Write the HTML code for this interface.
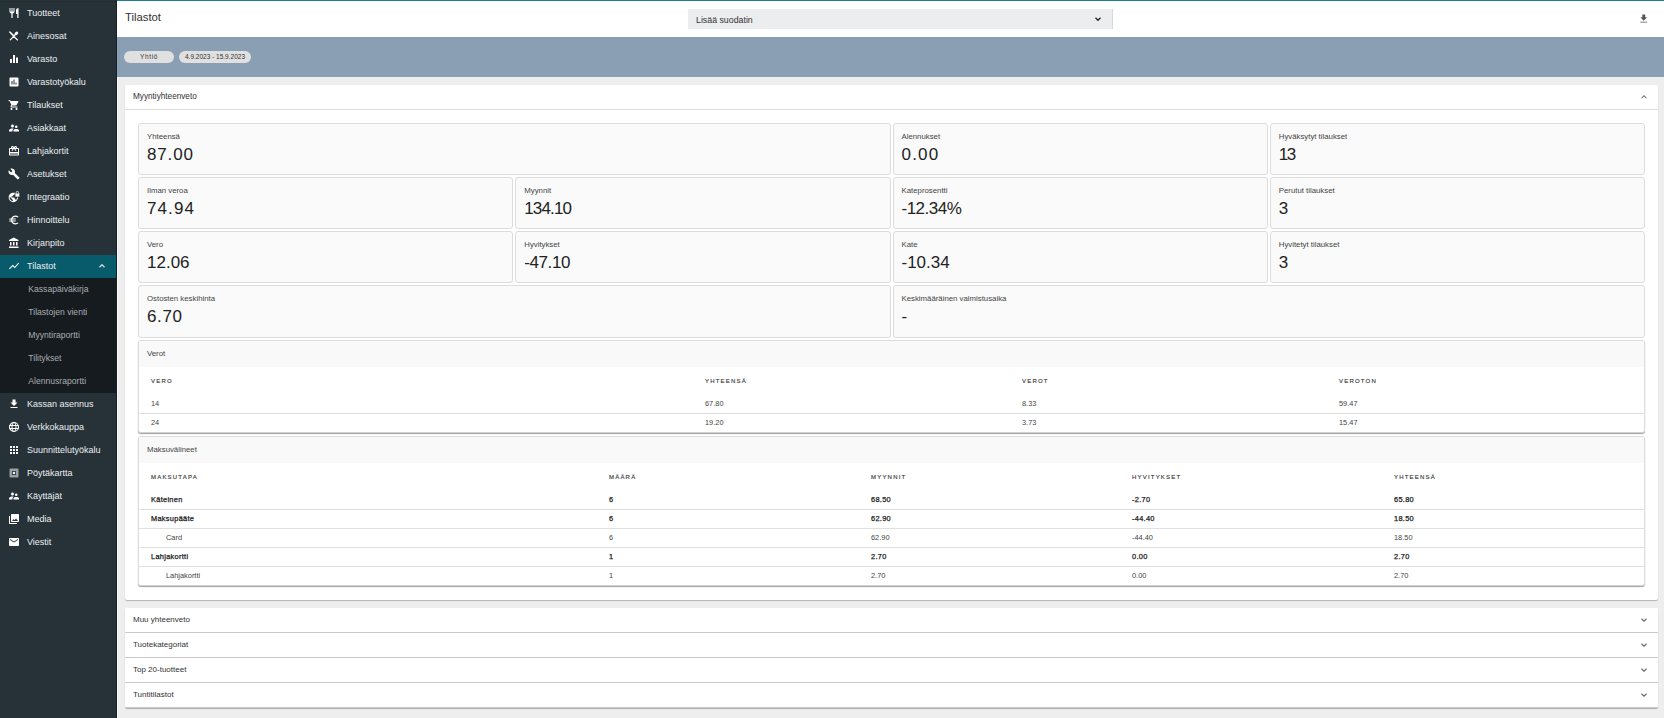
<!DOCTYPE html>
<html><head><meta charset="utf-8"><style>
*{box-sizing:border-box;margin:0;padding:0}
html,body{width:1664px;height:718px;overflow:hidden;background:#eeeeee;font-family:"Liberation Sans",sans-serif;position:relative}
#side{position:absolute;left:0;top:0;width:117px;height:718px;background:#263238;border-right:1px solid #182024}
#side:before{content:"";position:absolute;left:0;top:1px;width:116px;height:1px;background:#222b30}
#lite{position:absolute;left:117px;top:77px;width:1px;height:641px;background:#f7f7f7}
.si{position:absolute;left:0;width:116px;height:23px;color:#eceff1;font-size:9px}
.si span{position:absolute;left:27px;top:5px;line-height:12px;white-space:nowrap}
.si .ic{position:absolute;left:7.5px;top:5px;width:12px;height:12px}
.act{background:#085b6a}
.act .chev{position:absolute;left:97px;top:6px;width:10px;height:10px}
.subbg{position:absolute;left:0;width:116px;background:#161b1f}
.sub{color:#a9adb1;font-size:8.6px}
.sub span{left:28.3px}
#hdr{position:absolute;left:117px;top:0;width:1547px;height:37px;background:#fff;border-top:1px solid #1b7e92}
#hdr .title{position:absolute;left:8px;top:9px;font-size:11.3px;line-height:14px;color:#333}
#sel{position:absolute;left:571px;top:8px;width:425px;height:20px;background:#ecedef;border-right:1px solid #d8d9db}
#sel span{position:absolute;left:8px;top:6px;font-size:8.8px;line-height:10px;color:#333}
#sel svg{position:absolute;left:405px;top:5px;width:10px;height:10px}
#dl{position:absolute;left:1521px;top:11.8px;width:11.5px;height:11.5px}
#band{position:absolute;left:117px;top:37px;width:1547px;height:40px;background:#8a9fb4}
.chip{position:absolute;top:13.5px;height:12.5px;border-radius:7px;background:#e0e0e0;font-size:6.5px;line-height:12.5px;color:#333;text-align:center;white-space:nowrap}
#card{position:absolute;left:125px;top:85px;width:1533px;height:515px;background:#fff;border-radius:2px;box-shadow:0 1px 1px rgba(0,0,0,.25)}
#card .hd{position:absolute;left:0;top:0;width:100%;height:25px;border-bottom:1px solid #e0e0e0}
#card .hd span{position:absolute;left:8px;top:7px;font-size:8.2px;line-height:10px;color:#333}
.pchev{position:absolute;right:9px;top:7px;width:10px;height:10px}
.sc{position:absolute;background:#fafafa;border:1px solid #dcdcdc;border-radius:3px}
.sc .lb{position:absolute;left:8px;top:8px;font-size:7.8px;line-height:9px;color:#444;white-space:nowrap}
.sc .vl{position:absolute;left:8px;top:21px;font-size:17px;line-height:20px;letter-spacing:0.7px;color:#222;white-space:nowrap}
.tp{position:absolute;left:138px;width:1507px;background:#fff;border:1px solid #dcdcdc;border-bottom-color:#d2d2d2;border-radius:3px;box-shadow:0 1px 1px rgba(0,0,0,.38)}
.tp .th{position:absolute;left:0;top:0;width:100%;height:26px;background:#f9f9f9;font-size:7.8px;line-height:10px;padding:8px 0 0 8px;color:#444}
.hc{position:absolute;top:36px;font-size:6px;line-height:8px;font-weight:normal;-webkit-text-stroke:0.15px #3a3a3a;letter-spacing:1.2px;color:#3a3a3a}
.tr{position:absolute;left:0;width:100%;height:19px;border-bottom:1px solid #e0e0e0;font-size:7.4px;color:#444}
.tr:last-child{border-bottom:none}
.tr span{position:absolute;top:4px;line-height:9px;white-space:nowrap}
.tr.b{font-weight:normal;color:#1a1a1a;-webkit-text-stroke:0.25px #1a1a1a;letter-spacing:0.3px}
.cp{position:absolute;left:125px;width:1533px;height:25px;background:#fff;border-bottom:1px solid #c9c9c9}
.cp span{position:absolute;left:8px;top:7px;font-size:8px;line-height:10px;color:#333}
.cp .pchev{top:7px}
#cps{position:absolute;left:0;top:0}
</style></head><body>
<div id="side">
<div class="si" style="top:2px"><svg class="ic" viewBox="0 0 24 24"><path fill="#fff" d="M11 9H9V2H7v7H5V2H3v7c0 2.12 1.66 3.84 3.75 3.97V22h2.5v-9.03C11.34 12.84 13 11.12 13 9V2h-2v7zm5-3v8h2.5v8H21V2c-2.76 0-5 2.24-5 4z"/></svg><span>Tuotteet</span></div>
<div class="si" style="top:25px"><svg class="ic" viewBox="0 0 24 24"><path fill="#fff" d="M2.6 3.4c.5-.8 1.3-.9 2-.4l7.6 7.2-2.5 2.5L3 5.6c-.6-.6-.8-1.4-.4-2.2z"/><path d="M10.5 11.5L19 20M14 10L4.5 19.8" stroke="#fff" stroke-width="2.3" stroke-linecap="round"/><ellipse cx="16.8" cy="6.8" rx="4.3" ry="2.9" transform="rotate(-45 16.8 6.8)" fill="#fff"/></svg><span>Ainesosat</span></div>
<div class="si" style="top:48px"><svg class="ic" viewBox="0 0 24 24"><path fill="#fff" d="M10 20h4V4h-4v16zm-6 0h4v-8H4v8zM16 9v11h4V9h-4z"/></svg><span>Varasto</span></div>
<div class="si" style="top:71px"><svg class="ic" viewBox="0 0 24 24"><path fill="#fff" d="M19 3H5c-1.1 0-2 .9-2 2v14c0 1.1.9 2 2 2h14c1.1 0 2-.9 2-2V5c0-1.1-.9-2-2-2zM9 17H7v-7h2v7zm4 0h-2V7h2v10zm4 0h-2v-4h2v4z"/></svg><span>Varastotyökalu</span></div>
<div class="si" style="top:94px"><svg class="ic" viewBox="0 0 24 24"><path fill="#fff" d="M7 18c-1.1 0-1.99.9-1.99 2S5.9 22 7 22s2-.9 2-2-.9-2-2-2zM1 2v2h2l3.6 7.59-1.35 2.45c-.16.28-.25.61-.25.96 0 1.1.9 2 2 2h12v-2H7.42c-.14 0-.25-.11-.25-.25l.03-.12.9-1.630h7.45c.75 0 1.41-.41 1.75-1.03l3.58-6.49c.08-.14.12-.31.12-.48 0-.55-.45-1-1-1H5.21l-.94-2H1zm16 16c-1.1 0-1.99.9-1.99 2s.89 2 1.990 2 2-.9 2-2-.9-2-2-2z"/></svg><span>Tilaukset</span></div>
<div class="si" style="top:117px"><svg class="ic" viewBox="0 0 24 24"><path fill="#fff" d="M16.5 12c1.38 0 2.49-1.12 2.49-2.5S17.88 7 16.5 7C15.12 7 14 8.12 14 9.5s1.12 2.5 2.5 2.5zM9 11c1.66 0 2.99-1.34 2.99-3S10.66 5 9 5C7.34 5 6 6.34 6 8s1.34 3 3 3zm7.5 3c-1.83 0-5.5.92-5.5 2.75V19h11v-2.25c0-1.830-3.67-2.75-5.5-2.75zM9 13c-2.33 0-7 1.17-7 3.5V19h7v-2.25c0-.85.33-2.34 2.37-3.47C10.5 13.1 9.66 13 9 13z"/></svg><span>Asiakkaat</span></div>
<div class="si" style="top:140px"><svg class="ic" viewBox="0 0 24 24"><path fill="#fff" d="M20 6h-2.18c.11-.31.18-.65.18-1 0-1.66-1.34-3-3-3-1.05 0-1.96.54-2.5 1.35l-.5.67-.5-.68C10.96 2.54 10.05 2 9 2 7.34 2 6 3.34 6 5c0 .35.07.69.18 1H4c-1.11 0-1.99.89-1.99 2L2 19c0 1.11.89 2 2 2h16c1.11 0 2-.89 2-2V8c0-1.11-.89-2-2-2zm-5-2c.55 0 1 .45 1 1s-.45 1-1 1-1-.45-1-1 .45-1 1-1zM9 4c.55 0 1 .45 1 1s-.45 1-1 1-1-.45-1-1 .45-1 1-1zm11 15H4v-2h16v2zm0-5H4V8h5.08L7 10.83 8.62 12 11 8.76l1-1.36 1 1.36L15.38 12 17 10.830 14.92 8H20v6z"/></svg><span>Lahjakortit</span></div>
<div class="si" style="top:163px"><svg class="ic" viewBox="0 0 24 24"><path fill="#fff" d="M22.7 19l-9.1-9.1c.9-2.3.4-5-1.5-6.9-2-2-5-2.4-7.4-1.3L9 6 6 9 1.6 4.7C.4 7.1.9 10.1 2.9 12.1c1.9 1.9 4.6 2.4 6.9 1.5l9.1 9.1c.4.4 1 .4 1.4 0l2.3-2.3c.5-.4.5-1.1.1-1.4z"/></svg><span>Asetukset</span></div>
<div class="si" style="top:186px"><svg class="ic" viewBox="0 0 24 24"><g transform="translate(-0.5 1.8) scale(0.93)"><path fill="#fff" d="M12 2C6.48 2 2 6.48 2 12s4.48 10 10 10 10-4.48 10-10S17.52 2 12 2zm-1 17.93c-3.95-.49-7-3.85-7-7.93 0-.62.08-1.21.21-1.79L9 15v1c0 1.1.9 2 2 2v1.93zm6.9-2.54c-.26-.81-1-1.39-1.9-1.39h-1v-3c0-.55-.45-1-1-1H8v-2h2c.55 0 1-.45 1-1V7h2c1.1 0 2-.9 2-2v-.41c2.93 1.19 5 4.06 5 7.41 0 2.08-.8 3.97-2.1 5.39z"/></g><rect x="14" y="4" width="9.5" height="8" rx="1" fill="#fff" stroke="#263238" stroke-width="1.5"/><path d="M16.3 4.5V3.3a2.45 2.45 0 0 1 4.9 0V4.5" fill="none" stroke="#fff" stroke-width="1.6"/></svg><span>Integraatio</span></div>
<div class="si" style="top:209px"><svg class="ic" viewBox="0 0 24 24"><path fill="#fff" d="M15 18.5c-2.51 0-4.68-1.42-5.76-3.5H15l1-2H8.58c-.05-.33-.08-.66-.08-1s.03-.67.08-1H15l1-2H9.24C10.320 6.92 12.5 5.5 15 5.5c1.61 0 3.09.59 4.23 1.57L21 5.3C19.41 3.87 17.3 3 15 3c-3.92 0-7.24 2.51-8.48 6H3l-1 2h4.06c-.04.33-.06.66-.06 1s.02.67.06 1H3l-1 2h4.52c1.24 3.49 4.56 6 8.48 6 2.31 0 4.41-.87 6-2.3l-1.78-1.77c-1.13.98-2.6 1.57-4.22 1.57z"/></svg><span>Hinnoittelu</span></div>
<div class="si" style="top:232px"><svg class="ic" viewBox="0 0 24 24"><path fill="#fff" d="M4 10v7h3v-7H4zm6 0v7h3v-7h-3zM2 22h19v-3H2v3zm14-12v7h3v-7h-3zm-4.5-9L2 6v2h19V6l-9.5-5z"/></svg><span>Kirjanpito</span></div>
<div class="si act" style="top:255px"><svg class="ic" viewBox="0 0 24 24"><path fill="#fff" d="M3.5 18.49l6-6.01 4 4L22 6.92l-1.41-1.41-7.09 7.970-4-4L2 16.99z"/></svg><span>Tilastot</span><svg class="chev" viewBox="0 0 24 24"><path fill="none" stroke="#cfd8dc" stroke-width="3" d="M6 15l6-6 6 6"/></svg></div>
<div class="subbg" style="top:278px;height:115px"></div>
<div class="si sub" style="top:278px"><span>Kassapäiväkirja</span></div>
<div class="si sub" style="top:301px"><span>Tilastojen vienti</span></div>
<div class="si sub" style="top:324px"><span>Myyntiraportti</span></div>
<div class="si sub" style="top:347px"><span>Tilitykset</span></div>
<div class="si sub" style="top:370px"><span>Alennusraportti</span></div>
<div class="si" style="top:393px"><svg class="ic" viewBox="0 0 24 24"><path fill="#fff" d="M19 9h-4V3H9v6H5l7 7 7-7zM5 18v2h14v-2H5z"/></svg><span>Kassan asennus</span></div>
<div class="si" style="top:416px"><svg class="ic" viewBox="0 0 24 24"><circle cx="12" cy="12" r="9" fill="none" stroke="#fff" stroke-width="2.2"/><ellipse cx="12" cy="12" rx="4" ry="9" fill="none" stroke="#fff" stroke-width="2"/><path d="M3 9h18M3 15h18" stroke="#fff" stroke-width="2"/></svg><span>Verkkokauppa</span></div>
<div class="si" style="top:439px"><svg class="ic" viewBox="0 0 24 24"><path fill="#fff" d="M4 8h4V4H4v4zm6 12h4v-4h-4v4zm-6 0h4v-4H4v4zm0-6h4v-4H4v4zm6 0h4v-4h-4v4zm6-10v4h4V4h-4zm-6 4h4V4h-4v4zm6 6h4v-4h-4v4zm0 6h4v-4h-4v4z"/></svg><span>Suunnittelutyökalu</span></div>
<div class="si" style="top:462px"><svg class="ic" viewBox="0 0 24 24"><rect x="3" y="3" width="18" height="18" rx="2" fill="#9aa0a4"/><rect x="8" y="8" width="8" height="8" rx="1" fill="#263238"/><circle cx="12" cy="12" r="2.6" fill="#eee"/></svg><span>Pöytäkartta</span></div>
<div class="si" style="top:485px"><svg class="ic" viewBox="0 0 24 24"><path fill="#fff" d="M16.5 12c1.38 0 2.49-1.12 2.49-2.5S17.88 7 16.5 7C15.12 7 14 8.12 14 9.5s1.12 2.5 2.5 2.5zM9 11c1.66 0 2.99-1.34 2.99-3S10.66 5 9 5C7.34 5 6 6.34 6 8s1.34 3 3 3zm7.5 3c-1.83 0-5.5.92-5.5 2.75V19h11v-2.25c0-1.83-3.67-2.75-5.5-2.75zM9 13c-2.33 0-7 1.17-7 3.5V19h7v-2.25c0-.85.33-2.34 2.37-3.47C10.5 13.1 9.66 13 9 13z"/></svg><span>Käyttäjät</span></div>
<div class="si" style="top:508px"><svg class="ic" viewBox="0 0 24 24"><path fill="#fff" d="M22 16V4c0-1.1-.9-2-2-2H8c-1.1 0-2 .9-2 2v12c0 1.1.9 2 2 2h12c1.1 0 2-.9 2-2zm-11-4l2.03 2.71L16 11l4 5H8l3-4zM2 6v14c0 1.1.9 2 2 2h14v-2H4V6H2z"/></svg><span>Media</span></div>
<div class="si" style="top:531px"><svg class="ic" viewBox="0 0 24 24"><path fill="#fff" d="M20 4H4c-1.1 0-1.99.9-1.99 2L2 18c0 1.1.9 2 2 2h16c1.1 0 2-.9 2-2V6c0-1.1-.9-2-2-2zm0 4l-8 5-8-5V6l8 5 8-5v2z"/></svg><span>Viestit</span></div>
</div>
<div id="lite"></div>
<div id="hdr"><div class="title">Tilastot</div>
<div id="sel"><span>Lisää suodatin</span><svg viewBox="0 0 24 24"><path fill="none" stroke="#222" stroke-width="3" d="M6 9l6 6 6-6"/></svg></div>
<svg id="dl" viewBox="0 0 24 24"><path fill="#555" d="M19 9h-4V3H9v6H5l7 7 7-7zM5 18v2h14v-2H5z"/></svg>
</div>
<div id="band">
<div class="chip" style="left:7px;width:50px;letter-spacing:0.6px">Yhtiö</div>
<div class="chip" style="left:62px;width:72px">4.9.2023 - 15.9.2023</div>
</div>
<div id="card"><div class="hd"><span>Myyntiyhteenveto</span><svg class="pchev" viewBox="0 0 24 24"><path fill="none" stroke="#666" stroke-width="2.5" d="M6 15l6-6 6 6"/></svg></div></div>
<div class="sc" style="left:138px;top:123px;width:752.5px;height:52px"><div class="lb">Yhteensä</div><div class="vl" style="letter-spacing:0.85px">87.00</div></div>
<div class="sc" style="left:892.5px;top:123px;width:375.25px;height:52px"><div class="lb">Alennukset</div><div class="vl" style="letter-spacing:1.2px">0.00</div></div>
<div class="sc" style="left:1269.75px;top:123px;width:375.25px;height:52px"><div class="lb">Hyväksytyt tilaukset</div><div class="vl" style="letter-spacing:-1.5px">13</div></div>
<div class="sc" style="left:138px;top:177px;width:375.25px;height:52px"><div class="lb">Ilman veroa</div><div class="vl" style="letter-spacing:1.1px">74.94</div></div>
<div class="sc" style="left:515.25px;top:177px;width:375.25px;height:52px"><div class="lb">Myynnit</div><div class="vl" style="letter-spacing:-0.85px">134.10</div></div>
<div class="sc" style="left:892.5px;top:177px;width:375.25px;height:52px"><div class="lb">Kateprosentti</div><div class="vl" style="letter-spacing:-0.5px">-12.34%</div></div>
<div class="sc" style="left:1269.75px;top:177px;width:375.25px;height:52px"><div class="lb">Perutut tilaukset</div><div class="vl" style="letter-spacing:0px">3</div></div>
<div class="sc" style="left:138px;top:231px;width:375.25px;height:52px"><div class="lb">Vero</div><div class="vl" style="letter-spacing:0px">12.06</div></div>
<div class="sc" style="left:515.25px;top:231px;width:375.25px;height:52px"><div class="lb">Hyvitykset</div><div class="vl" style="letter-spacing:-0.4px">-47.10</div></div>
<div class="sc" style="left:892.5px;top:231px;width:375.25px;height:52px"><div class="lb">Kate</div><div class="vl" style="letter-spacing:0px">-10.34</div></div>
<div class="sc" style="left:1269.75px;top:231px;width:375.25px;height:52px"><div class="lb">Hyvitetyt tilaukset</div><div class="vl" style="letter-spacing:0px">3</div></div>
<div class="sc" style="left:138px;top:285px;width:752.5px;height:53px"><div class="lb">Ostosten keskihinta</div><div class="vl" style="letter-spacing:0.6px">6.70</div></div>
<div class="sc" style="left:892.5px;top:285px;width:752.5px;height:53px"><div class="lb">Keskimääräinen valmistusaika</div><div class="vl" style="letter-spacing:0px">-</div></div>
<div class="tp" style="top:340px;height:93px">
<div class="th">Verot</div>
<div class="hc" style="left:12px">VERO</div>
<div class="hc" style="left:566px">YHTEENSÄ</div>
<div class="hc" style="left:883px">VEROT</div>
<div class="hc" style="left:1200px">VEROTON</div>
<div class="tr" style="top:54px">
<span style="left:12px">14</span>
<span style="left:566px">67.80</span>
<span style="left:883px">8.33</span>
<span style="left:1200px">59.47</span>
</div>
<div class="tr" style="top:73px">
<span style="left:12px">24</span>
<span style="left:566px">19.20</span>
<span style="left:883px">3.73</span>
<span style="left:1200px">15.47</span>
</div>
</div>
<div class="tp" style="top:436px;height:150px">
<div class="th">Maksuvälineet</div>
<div class="hc" style="left:12px">MAKSUTAPA</div>
<div class="hc" style="left:470px">MÄÄRÄ</div>
<div class="hc" style="left:732px">MYYNNIT</div>
<div class="hc" style="left:993px">HYVITYKSET</div>
<div class="hc" style="left:1255px">YHTEENSÄ</div>
<div class="tr b" style="top:54px">
<span style="left:12px">Käteinen</span>
<span style="left:470px">6</span>
<span style="left:732px">68.50</span>
<span style="left:993px">-2.70</span>
<span style="left:1255px">65.80</span>
</div>
<div class="tr b" style="top:73px">
<span style="left:12px">Maksupääte</span>
<span style="left:470px">6</span>
<span style="left:732px">62.90</span>
<span style="left:993px">-44.40</span>
<span style="left:1255px">18.50</span>
</div>
<div class="tr" style="top:92px">
<span style="left:27px">Card</span>
<span style="left:470px">6</span>
<span style="left:732px">62.90</span>
<span style="left:993px">-44.40</span>
<span style="left:1255px">18.50</span>
</div>
<div class="tr b" style="top:111px">
<span style="left:12px">Lahjakortti</span>
<span style="left:470px">1</span>
<span style="left:732px">2.70</span>
<span style="left:993px">0.00</span>
<span style="left:1255px">2.70</span>
</div>
<div class="tr" style="top:130px">
<span style="left:27px">Lahjakortti</span>
<span style="left:470px">1</span>
<span style="left:732px">2.70</span>
<span style="left:993px">0.00</span>
<span style="left:1255px">2.70</span>
</div>
</div>
<div style="position:absolute;left:125px;top:608px;width:1533px;height:100px;border-radius:2px;box-shadow:0 1px 1px rgba(0,0,0,.28)"></div>
<div class="cp" style="top:608px"><span>Muu yhteenveto</span><svg class="pchev" viewBox="0 0 24 24"><path fill="none" stroke="#666" stroke-width="2.6" d="M6 9l6 6 6-6"/></svg></div>
<div class="cp" style="top:633px"><span>Tuotekategoriat</span><svg class="pchev" viewBox="0 0 24 24"><path fill="none" stroke="#666" stroke-width="2.6" d="M6 9l6 6 6-6"/></svg></div>
<div class="cp" style="top:658px"><span>Top 20-tuotteet</span><svg class="pchev" viewBox="0 0 24 24"><path fill="none" stroke="#666" stroke-width="2.6" d="M6 9l6 6 6-6"/></svg></div>
<div class="cp" style="top:683px"><span>Tuntitilastot</span><svg class="pchev" viewBox="0 0 24 24"><path fill="none" stroke="#666" stroke-width="2.6" d="M6 9l6 6 6-6"/></svg></div>
</body></html>
